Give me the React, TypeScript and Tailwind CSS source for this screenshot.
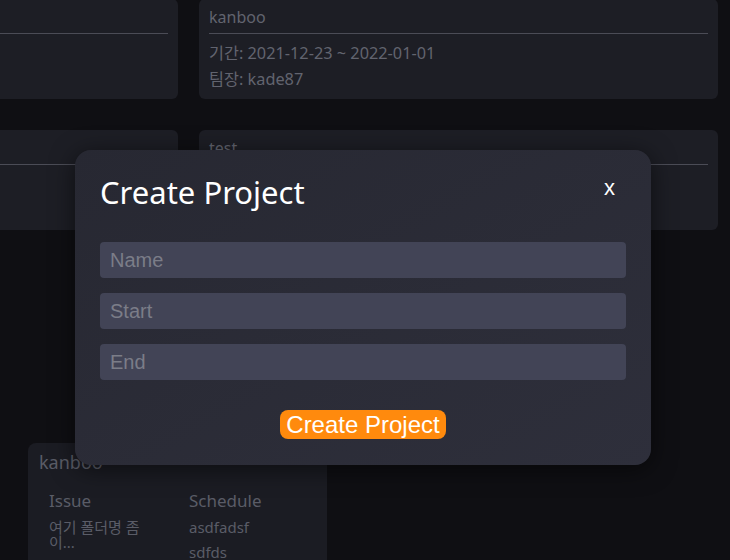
import React from "react";

// Background project cards
type Card = { title: string; lines: string[] };

const rows: Card[][] = [
  [
    { title: "kanboo", lines: ["기간: 2021-12-20 ~ 2021-12-31", "팀장: kade87"] },
    { title: "kanboo", lines: ["기간: 2021-12-23 ~ 2022-01-01", "팀장: kade87"] },
  ],
  [
    { title: "test", lines: ["기간: 2021-12-24 ~ 2021-12-30", "팀장: kade87"] },
    { title: "test", lines: ["기간: 2021-12-24 ~ 2021-12-30", "팀장: kade87"] },
  ],
];

function ProjectCard({ card }: { card: Card }) {
  return (
    <div className="bg-[#1d1e25] rounded-md px-[10px] pt-[6px] pb-[7px] text-[#62646f]">
      <p className="text-base leading-6 pb-1 border-b border-[#4b4c56]">{card.title}</p>
      <div className="mt-[6px]">
        {card.lines.map((line, key) => (
          <p className="text-[16.3px] leading-[26px] whitespace-nowrap" key={key}>
            {line}
          </p>
        ))}
      </div>
    </div>
  );
}

export default function App() {
  const issues = ["여기 폴더명 좀 이...", "Eixhhal alwin"];
  const schedules = ["asdfadsf", "sdfds", "qwer"];

  return (
    <div className="relative w-[730px] h-[560px] overflow-hidden bg-[#0f0f13] font-['Noto_Sans','Noto_Sans_CJK_KR',sans-serif]">
      {/* Project grid */}
      <div className="grid grid-cols-[519px_519px] gap-x-[21px] gap-y-[31px] ml-[-341px] mt-[-1px]">
        {rows.flat().map((card, key) => (
          <ProjectCard card={card} key={key} />
        ))}
      </div>

      {/* Board card */}
      <div className="ml-[28px] mt-[213px] w-[299px] h-[200px] bg-[#1b1c23] rounded-lg px-[11px] pt-[5px] text-[#5a5c67]">
        <p className="text-lg leading-7">kanboo</p>
        <div className="grid grid-cols-[120px_120px] gap-x-5 pl-[10px] mt-[13px]">
          <div>
            <p className="text-[17px] leading-6">Issue</p>
            <div className="flex flex-col gap-[10px] mt-[7px]">
              {issues.map((item, key) => (
                <p className="text-[15px] leading-[15px] w-[108px]" key={key}>
                  {item}
                </p>
              ))}
            </div>
          </div>
          <div>
            <p className="text-[17px] leading-6">Schedule</p>
            <div className="flex flex-col gap-[10px] mt-[7px]">
              {schedules.map((item, key) => (
                <p className="text-[15px] leading-[15px]" key={key}>
                  {item}
                </p>
              ))}
            </div>
          </div>
        </div>
      </div>

      {/* Create project modal */}
      <div className="absolute left-[75px] top-[150px] w-[576px] h-[315px] rounded-2xl bg-gradient-to-br from-[#272832] to-[#2e2f3b] shadow-[0_4px_24px_rgba(0,0,0,0.55)] px-[25px] pt-[22px] flex flex-col">
        <div className="flex flex-row justify-between items-start">
          <h1 className="text-[31px] leading-[40px] text-white">Create Project</h1>
          <button className="mt-[5px] mr-[11px] text-[22px] leading-[22px] text-white font-['Liberation_Sans',sans-serif]">
            x
          </button>
        </div>

        <div className="flex flex-col gap-[15px] mt-[30px]">
          {["Name", "Start", "End"].map((label) => (
            <input
              key={label}
              placeholder={label}
              className="w-full h-9 rounded bg-[#424456] pl-[10px] text-[20px] text-white placeholder:text-[#7b7d88] outline-none font-['Liberation_Sans',sans-serif]"
            />
          ))}
        </div>

        <button className="self-center mt-[30px] w-[166px] h-[29px] rounded-lg bg-[#ff8a0d] text-white text-[24px] leading-[29px] font-['Liberation_Sans',sans-serif]">
          Create Project
        </button>
      </div>
    </div>
  );
}
